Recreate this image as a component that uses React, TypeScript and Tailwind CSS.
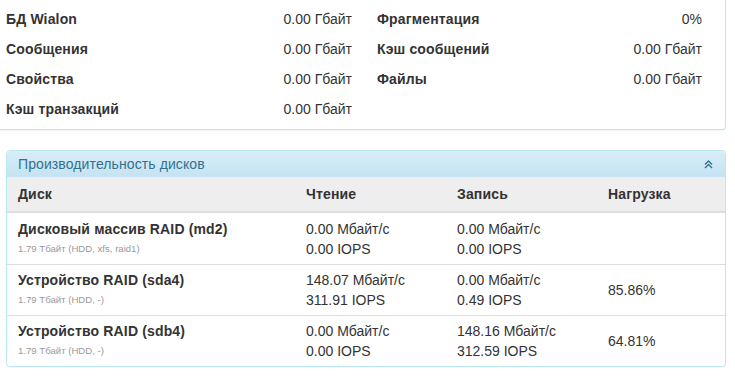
import React from "react";

const top = [
  ["БД Wialon", "0.00 Гбайт", "Фрагментация", "0%"],
  ["Сообщения", "0.00 Гбайт", "Кэш сообщений", "0.00 Гбайт"],
  ["Свойства", "0.00 Гбайт", "Файлы", "0.00 Гбайт"],
  ["Кэш транзакций", "0.00 Гбайт", "", ""],
];

const rows = [
  { name: "Дисковый массив RAID (md2)", sub: "1.79 Тбайт (HDD, xfs, raid1)", r1: "0.00 Мбайт/с", r2: "0.00 IOPS", w1: "0.00 Мбайт/с", w2: "0.00 IOPS", load: "" },
  { name: "Устройство RAID (sda4)", sub: "1.79 Тбайт (HDD, -)", r1: "148.07 Мбайт/с", r2: "311.91 IOPS", w1: "0.00 Мбайт/с", w2: "0.49 IOPS", load: "85.86%" },
  { name: "Устройство RAID (sdb4)", sub: "1.79 Тбайт (HDD, -)", r1: "0.00 Мбайт/с", r2: "0.00 IOPS", w1: "148.16 Мбайт/с", w2: "312.59 IOPS", load: "64.81%" },
];

export default function App() {
  return (
    <div
      className="w-[735px] h-[380px] bg-white text-[14px] text-[#333] overflow-hidden"
      style={{ fontFamily: '"Liberation Sans", Arial, sans-serif' }}
    >
      <div className="w-[726px] border-r border-b border-[#bce8f1] rounded-br-[4px] shadow-[0_1px_1px_rgba(0,0,0,0.05)] pt-[4px] pb-[5px] pl-[6px]">
        {top.map((r, i) => (
          <div key={i} className="flex h-[30px] items-center pt-[1px]">
            <div className="w-[346px] flex justify-between">
              <span className="font-bold tracking-[0.15px]">{r[0]}</span>
              <span>{r[1]}</span>
            </div>
            <div className="w-[325px] ml-[25px] flex justify-between">
              <span className="font-bold tracking-[0.15px]">{r[2]}</span>
              <span>{r[3]}</span>
            </div>
          </div>
        ))}
      </div>

      <div className="mt-[20px] ml-[6px] w-[720px] border border-[#bce8f1] rounded-[4px] shadow-[0_1px_1px_rgba(0,0,0,0.05)] overflow-hidden">
        <div className="h-[26px] flex items-center justify-between pl-[11px] pr-[12px] bg-gradient-to-b from-[#d9edf7] to-[#c4e3f3] text-[#31708f] text-[14px]">
          <span className="tracking-[0.1px]">Производительность дисков</span>
          <svg width="9" height="9" viewBox="0 0 9 9" fill="none" stroke="#31708f" strokeWidth="1.3">
            <path d="M1 4.5 L4.5 1 L8 4.5" />
            <path d="M1 8 L4.5 4.5 L8 8" />
          </svg>
        </div>
        <div className="flex h-[36px] items-center bg-[#eeeeee] border-b-2 border-[#dddddd] font-bold tracking-[0.15px]">
          <div className="w-[299px] pl-[11px]">Диск</div>
          <div className="w-[151px]">Чтение</div>
          <div className="w-[151px]">Запись</div>
          <div>Нагрузка</div>
        </div>
        {rows.map((r, i) => (
          <div key={i} className={`flex items-center h-[51px] ${i > 0 ? "border-t border-[#dddddd]" : ""}`}>
            <div className="w-[299px] pl-[11px]">
              <div className="font-bold tracking-[0.15px] leading-[20px]">{r.name}</div>
              <div className="text-[9.6px] text-[#999] leading-[20px]">{r.sub}</div>
            </div>
            <div className="w-[151px]">
              <div className="leading-[20px]">{r.r1}</div>
              <div className="leading-[20px]">{r.r2}</div>
            </div>
            <div className="w-[151px]">
              <div className="leading-[20px]">{r.w1}</div>
              <div className="leading-[20px]">{r.w2}</div>
            </div>
            <div>{r.load}</div>
          </div>
        ))}
      </div>
    </div>
  );
}
